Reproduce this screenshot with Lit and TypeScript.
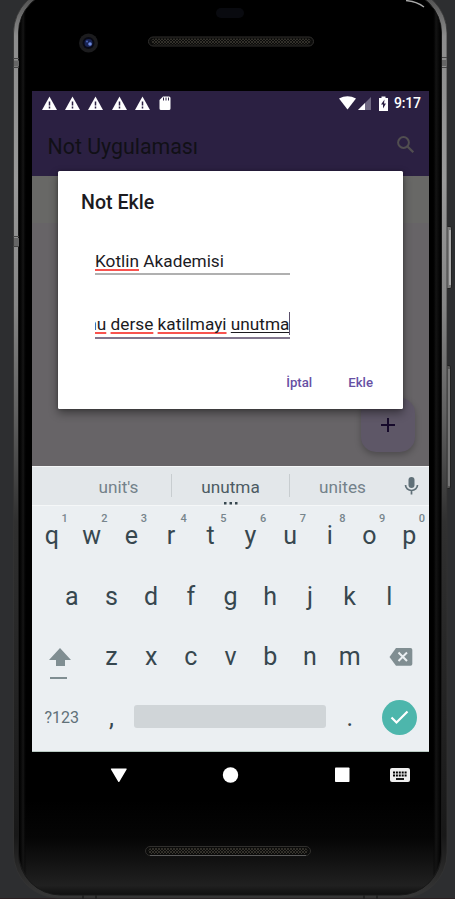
import { LitElement, html, svg, css } from "lit";
import { customElement } from "lit/decorators.js";

@customElement("device-frame")
class DeviceFrame extends LitElement {
  static styles = css`
    :host { display: block; width: 455px; height: 899px; }
    svg { display: block; }
  `;
  render() {
    const grille = (x: number, y: number) => svg`
      <rect x=${x} y=${y} width="165" height="9" rx="4.5" fill="#0c0c0b" stroke="#302f2d"/>
      <rect x=${x + 3} y=${y + 1.5} width="159" height="6" rx="3" fill="url(#mesh)"/>`;
    return html`<svg width="455" height="899" viewBox="0 0 455 899">
      <defs>
        <linearGradient id="rim" x1="0" y1="0" x2="0" y2="899" gradientUnits="userSpaceOnUse">
          <stop offset="0" stop-color="#555"/><stop offset=".04" stop-color="#8c8c8c"/>
          <stop offset=".2" stop-color="#999"/><stop offset=".34" stop-color="#858585"/>
          <stop offset=".46" stop-color="#606060"/><stop offset=".58" stop-color="#303030"/>
          <stop offset=".75" stop-color="#252525"/><stop offset=".93" stop-color="#181818"/>
          <stop offset="1" stop-color="#383838"/>
        </linearGradient>
        <linearGradient id="glass" x1="0" y1="800" x2="0" y2="895" gradientUnits="userSpaceOnUse">
          <stop offset="0" stop-color="#000"/><stop offset=".4" stop-color="#050505"/>
          <stop offset=".9" stop-color="#202020"/><stop offset="1" stop-color="#101010"/>
        </linearGradient>
        <linearGradient id="edge" x1="19" y1="0" x2="441" y2="0" gradientUnits="userSpaceOnUse">
          <stop offset="0" stop-color="#000"/><stop offset=".005" stop-color="#080808"/>
          <stop offset=".01" stop-color="#151515"/><stop offset=".018" stop-color="#000" stop-opacity="0"/>
          <stop offset=".98" stop-color="#000" stop-opacity="0"/><stop offset=".988" stop-color="#141414"/>
          <stop offset="1" stop-color="#000"/>
        </linearGradient>
        <pattern id="mesh" width="3" height="3" patternUnits="userSpaceOnUse">
          <path d="M0 0l3 3M3 0L0 3" stroke="#403e36" stroke-width=".7"/>
        </pattern>
      </defs>
      <rect width="455" height="899" fill="#2d2e30"/>
      <path d="M0 898.5H455" stroke="#2b2022"/>
      <rect x="446" y="226.500" width="5.500" height="62" rx="1.500" fill="#777" stroke="#222"/>
      <path d="M450 230V285" stroke="#a9a9a9" stroke-width="2"/>
      <rect x="446" y="365.500" width="4.500" height="123" rx="1.500" fill="#555" stroke="#222"/>
      <path d="M449 369V486" stroke="#777" stroke-width="2"/>
      <rect x="13.500" y="-12" width="433.500" height="910" rx="45" fill="url(#rim)" stroke="#333" stroke-width=".8"/>
      <rect x="18.500" y="-9" width="423" height="904" rx="42" fill="url(#glass)" stroke="#181818"/>
      <rect x="19" y="-9" width="422" height="903" rx="42" fill="url(#edge)"/>
      <path d="M13 58.500H19M13 67.500H19M442 57.500H447M442 67.500H447M13 236.500H19M13 246.500H19" stroke="#444"/>
      <path d="M406 0.500Q417 1.500 424 7" fill="none" stroke="#aaa" stroke-width="1.300"/>
      <path d="M14 60.500h5v6h-5zM442 60h5v6h-5zM14 238h5v8h-5z" fill="#666"/>
      <path d="M83 895.500v3M96 895.500v3M364 895.500v3M377 895.500v3" stroke="#111"/>
      <rect x="216" y="8" width="28" height="10" rx="5" fill="#090a0f"/>
      <circle cx="88.500" cy="43" r="9.500" fill="#1c1c1e"/>
      <circle cx="88.500" cy="43" r="6" fill="#080914"/>
      <circle cx="88.500" cy="43" r="4" fill="#182353"/>
      <circle cx="90" cy="44" r="1.800" fill="#6f8ce0"/><circle cx="87" cy="41.500" r="1" fill="#4762b5"/>
      ${grille(148.5, 37)} ${grille(145.5, 846.5)}
      <path d="M150 855.500H306" stroke="#666" stroke-width=".8"/>
    </svg>`;
  }
}

@customElement("status-bar")
class StatusBar extends LitElement {
  static styles = css`
    :host { display: flex; height: 24px; align-items: center; padding: 0 8px 0 10px; box-sizing: border-box; color: #fff; }
    .left { display: flex; gap: 8.200px; flex: 1; }
    .right { display: flex; align-items: center; }
    svg { display: block; }
    .sd { margin-left: .500px; }
    .cell { margin-left: 2px; }
    .battery { margin-left: 8px; }
    .time { font: 500 14px/24px Roboto, sans-serif; margin: 0 1px 0 6px; width: 26px; white-space: nowrap; letter-spacing: -.2px; }
  `;
  render() {
    return html`
      <div class="left">
        ${[0, 1, 2, 3, 4].map(() => html`<svg width="15" height="14"><path d="M7.500 .5L15 14H0z" fill="#fff"/><path d="M7.500 5.500v4M7.500 10.500v2" stroke="#2b2042" stroke-width="1.500"/></svg>`)}
        <svg class="sd" width="13" height="14"><path d="M5 .5h6a1.500 1.500 0 0 1 1.500 1.500v10.500a1.500 1.500 0 0 1-1.500 1.500H3a1.500 1.500 0 0 1-1.500-1.500V4z" fill="#fff"/><path d="M5.500 1.500v3M8 1.500v3M10.500 1.500v3" stroke="#2b2042"/></svg>
      </div>
      <div class="right">
        <svg width="17" height="14"><path d="M0 2.500Q8.500-2 17 2.500L8.500 13.500z" fill="#fff"/></svg>
        <svg class="cell" width="13" height="13"><path d="M13 0V13H0z" fill="#706982"/><path d="M7 6V13H0z" fill="#fff"/></svg>
        <svg class="battery" width="9" height="15"><path d="M0 2h2.500V.5h4V2H9v13H0z" fill="#fff"/><path d="M5.500 3.500L2 8.500h2v4L7 7.500H5z" fill="#2b2042"/></svg>
        <span class="time">9:17</span>
      </div>`;
  }
}

@customElement("note-dialog")
class NoteDialog extends LitElement {
  static styles = css`
    :host { display: block; width: 345px; height: 238px; box-sizing: border-box; background: #fff; border-radius: 1.500px;
      padding: 20px 23px 0; box-shadow: 0 4px 10px rgba(0,0,0,.42), 0 0 3px rgba(0,0,0,.3); font-family: Roboto, sans-serif; color: #1c1b1f; }
    h2 { margin: 0; font-size: 19.600px; line-height: 24px; font-weight: 500; }
    .field { width: 195px; margin-left: 14px; overflow: hidden; white-space: pre; font-size: 17.250px; line-height: 24px; box-sizing: border-box; }
    .first { margin-top: 34px; height: 26px; border-bottom: 2px solid #b0b0b0; }
    .second { margin-top: 37px; height: 27px; border-bottom: 2px solid #82778e; display: flex; justify-content: flex-end; }
    .text { flex: none; }
    .bad { text-decoration: underline 1.500px #f8534f; text-underline-offset: 2px; text-decoration-skip-ink: none; }
    .composing { text-decoration: underline 1px #1c1b1f; text-underline-offset: 2px; text-decoration-skip-ink: none; }
    .caret { flex: none; width: 1.500px; height: 23px; background: #5b506c; margin-left: -1px; }
    .actions { display: flex; justify-content: flex-end; gap: 36px; margin: 33px 7px 0 0; }
    button { border: 0; background: none; padding: 0; color: #6750a4; font: 500 13.200px/22px Roboto, sans-serif; }
  `;
  render() {
    return html`
      <h2>Not Ekle</h2>
      <div class="field first"><span class="bad">Kotlin</span> Akademisi</div>
      <div class="field second"><span class="text"><span class="bad">Bunu</span> <span class="bad">derse</span> <span class="bad">katilmayi</span> <span class="composing">unutma</span></span><span class="caret"></span></div>
      <div class="actions"><button>İptal</button><button>Ekle</button></div>`;
  }
}

@customElement("soft-keyboard")
class SoftKeyboard extends LitElement {
  static styles = css`
    :host { display: block; height: 286px; box-sizing: border-box; background: #ebeff2; border-bottom: 1px solid #b9c9c2; font-family: Roboto, sans-serif; color: #37474f; }
    .strip { height: 39.500px; box-sizing: border-box; display: flex; align-items: center; background: #e3e7ea; border-top: 1px solid #f4f6f7; border-bottom: 1px solid #f5f7f8; padding-left: 34px; font-size: 17.200px; line-height: 24px; color: #74828a; }
    .word { flex: none; width: 105px; text-align: center; padding-top: 2px; }
    .mid { width: 117px; color: #4c5b63; position: relative; }
    .word.last { width: 105px; }
    .dots { position: absolute; left: 51px; top: 28px; }
    .rule { flex: none; width: 1px; height: 23px; background: #c8cdd0; }
    .mic { margin-left: 9px; flex: none; }
    .keys { display: flex; height: 60.500px; }
    .home { padding: 0 19.850px; }
    .key { flex: 1; position: relative; text-align: center; font-size: 25px; line-height: 30px; padding-top: 15.500px; box-sizing: border-box; }
    .hint { position: absolute; right: 4px; top: 6px; font-size: 11px; line-height: 14px; font-weight: 500; color: #77858c; }
    .wide { width: 59.500px; flex: none; display: flex; justify-content: center; }
    .shift { padding-top: 20px; box-sizing: border-box; padding-right: 4px; }
    .del { padding-top: 20px; box-sizing: border-box; padding-left: 3px; }
    .sym { font-size: 16px; line-height: 24px; color: #607078; padding-top: 19px; box-sizing: border-box; }
    .punct { flex: none; width: 39.700px; }
    .space { width: 192px; height: 23px; margin: 18px 3.600px 0 3.200px; flex: none; border-radius: 3px; background: #d0d5d8; }
    .enter { flex: none; width: 35px; height: 35px; margin: 12.500px 0 0 12px; }
    svg { display: block; }
  `;
  render() {
    const key = (c: string, n = "") => html`<div class="key">${c}${n ? html`<span class="hint">${n}</span>` : ""}</div>`;
    return html`
      <div class="strip">
        <span class="word">unit's</span><span class="rule"></span>
        <span class="word mid">unutma<svg class="dots" width="16" height="4"><path d="M1 1h2.500v2.500H1zM6.500 1H9v2.500H6.500zM12 1h2.500v2.500H12z" fill="#37474f"/></svg></span><span class="rule"></span>
        <span class="word last">unites</span>
        <svg class="mic" width="15" height="20"><rect x="4.500" y="1" width="6" height="11" rx="3" fill="#607078"/><path d="M1.500 9a6 5.500 0 0 0 12 0M7.500 14.500V18.500" fill="none" stroke="#607078" stroke-width="1.700"/></svg>
      </div>
      <div class="keys">${[..."qwertyuiop"].map((c, i) => key(c, String((i + 1) % 10)))}</div>
      <div class="keys home">${[..."asdfghjkl"].map((c) => key(c))}</div>
      <div class="keys">
        <div class="wide shift"><svg width="24" height="33"><path d="M12 1L23 13h-6v6H8v-6H1z" fill="#808e92"/><path d="M2 31h17" stroke="#808e92" stroke-width="2"/></svg></div>
        ${[..."zxcvbnm"].map((c) => key(c))}
        <div class="wide del"><svg width="24" height="20"><path d="M7 1H21.500a1.800 1.800 0 0 1 1.800 1.800V17a1.800 1.800 0 0 1-1.800 1.800H7L.5 10z" fill="#808e92"/><path d="M9.500 5.500l8.500 8.500M18 5.500L9.500 14" stroke="#ebeff2" stroke-width="2"/></svg></div>
      </div>
      <div class="keys">
        <div class="wide sym">?123</div><div class="key punct">,</div><div class="space"></div><div class="key punct">.</div>
        <svg class="enter" viewBox="0 0 35 35"><circle cx="17.500" cy="17.500" r="17.500" fill="#4db6ac"/><path d="M9.500 17.500l5 5L25.500 11.500" fill="none" stroke="#fff" stroke-width="2.200"/></svg>
      </div>`;
  }
}

@customElement("app-root")
class AppRoot extends LitElement {
  static styles = css`
    :host { display: grid; width: 455px; height: 899px; overflow: hidden; }
    .layer { grid-area: 1 / 1; }
    .screen { width: 397px; margin: 91px 0 0 32px; position: relative; z-index: 0; align-self: start; }
    .top { height: 85px; background: #2b2042; }
    .bar { height: 61px; display: flex; align-items: center; justify-content: space-between; padding: 0 14px 0 15.500px; }
    .title { font: 400 21.350px/30px Roboto, sans-serif; color: #111016; padding-top: 2px; }
    .search { margin-top: -3px; }
    .content { height: 290px; background: linear-gradient(#686866 0 47px, #676467 47px); position: relative; }
    .fab { position: absolute; right: 14px; bottom: 14px; width: 54.500px; height: 54.500px; border-radius: 15px; background: #5e5767; box-shadow: 0 3px 6px rgba(0,0,0,.25); display: grid; place-items: center; }
    .dialog { position: absolute; left: 26px; top: 80px; z-index: 2; }
    .nav { height: 46px; background: #000; }
    svg { display: block; }
  `;
  render() {
    return html`
      <device-frame class="layer"></device-frame>
      <main class="layer screen">
        <div class="top">
          <status-bar></status-bar>
          <div class="bar"><span class="title">Not Uygulaması</span>
            <svg class="search" width="19" height="19"><circle cx="7.500" cy="7.500" r="5.400" fill="none" stroke="#514e50" stroke-width="2"/><path d="M11.500 11.500l5.800 5.800" stroke="#514e50" stroke-width="2.300"/></svg>
          </div>
        </div>
        <div class="content"><div class="fab"><svg width="14" height="14"><path d="M7 0v14M0 7h14" stroke="#160a2b" stroke-width="2"/></svg></div></div>
        <soft-keyboard></soft-keyboard>
        <svg class="nav" width="397" height="46">
          <path d="M79.500 16.500h14.500q1.200 0 .6 1L87.500 29.500q-.7 1-1.400 0L79 17.500q-.6-1 .5-1z" fill="#fff"/>
          <circle cx="198.500" cy="23" r="7.700" fill="#fff"/><rect x="303" y="15.500" width="14.500" height="14.500" rx=".8" fill="#fff"/>
          <rect x="358" y="16" width="20" height="14" rx="2" fill="#eee"/>
          <path d="M361 20.500h14M361 23.500h14" stroke="#000" stroke-width="2" stroke-dasharray="2 .9"/><path d="M364 27h8" stroke="#000" stroke-width="1.800"/>
        </svg>
        <note-dialog class="dialog"></note-dialog>
      </main>`;
  }
}
